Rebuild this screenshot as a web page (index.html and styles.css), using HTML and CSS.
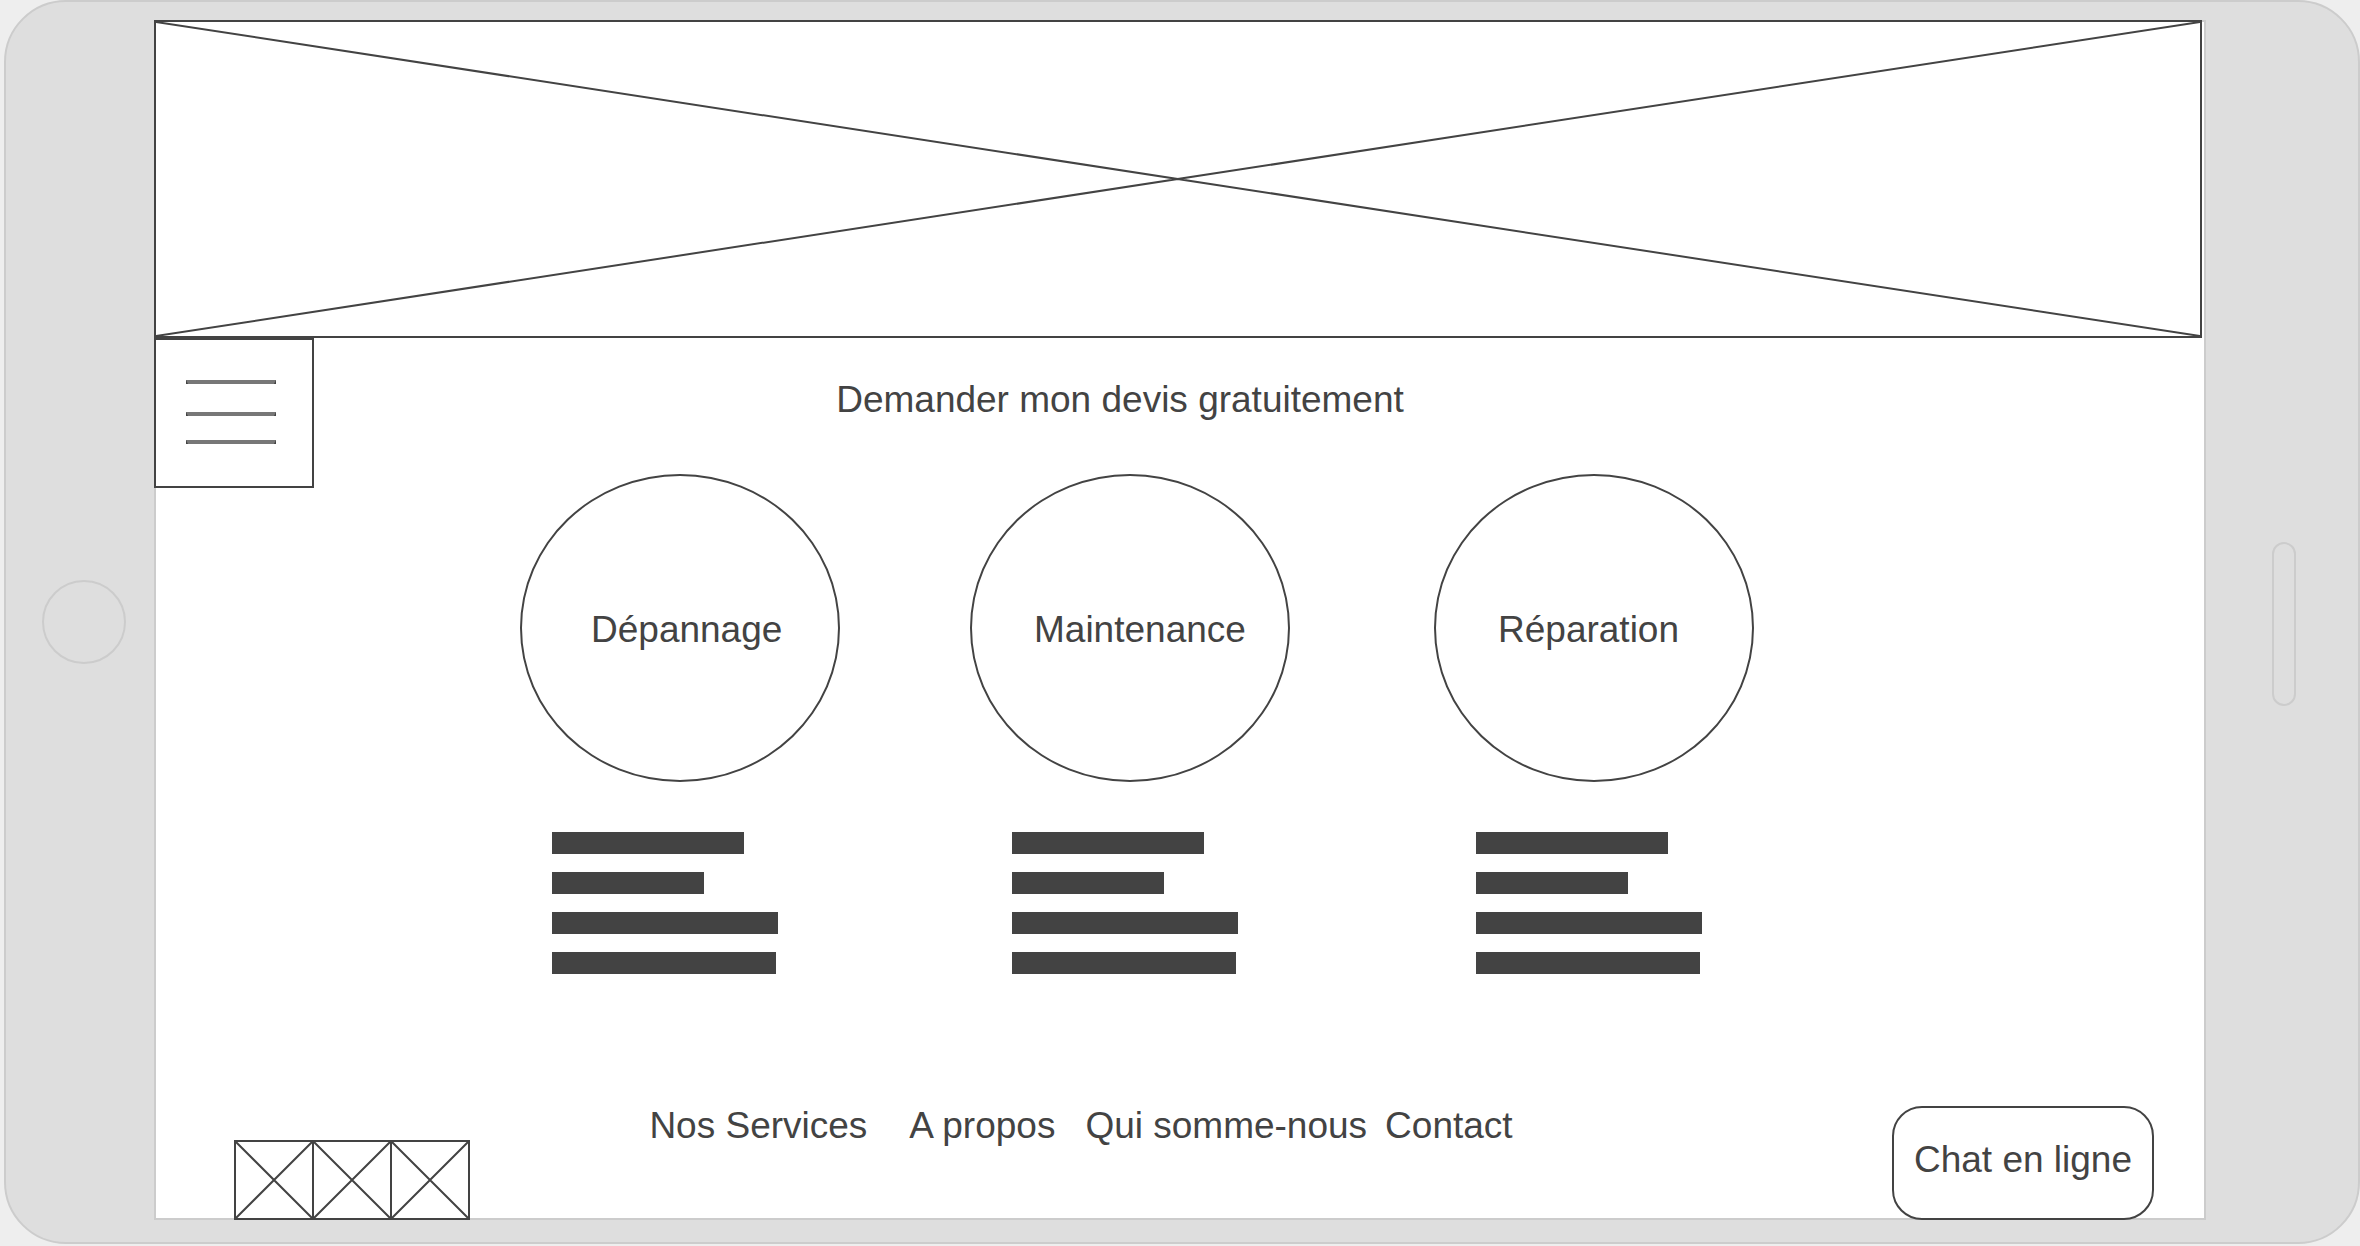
FILE: index.html
```html
<!DOCTYPE html>
<html lang="fr">
<head>
  <meta charset="utf-8">
  <meta name="viewport" content="width=device-width, initial-scale=1">
  <title>Demander mon devis gratuitement</title>
  <link rel="stylesheet" href="styles.css">
</head>
<body>
  <div class="device">
    <div class="bezel bezel--left"><span class="home-button"></span></div>

    <div class="screen">
      <header class="hero">
        <svg class="cross" viewBox="0 0 100 100" preserveAspectRatio="none" aria-hidden="true">
          <path d="M0 0L100 100M0 100L100 0" vector-effect="non-scaling-stroke"/>
        </svg>
      </header>

      <main class="main">
        <button class="menu" type="button" aria-label="Menu">
          <svg width="90" height="64" viewBox="0 0 90 64" aria-hidden="true">
            <path class="menu-line" d="M0 0H90V4H0ZM0 32H90V36H0ZM0 60H90V64H0Z"/>
            <path class="menu-tip" d="M0 0L2 4H0ZM90 0L88 4H90ZM0 32L2 36H0ZM90 32L88 36H90ZM0 60L2 64H0ZM90 60L88 64H90Z"/>
          </svg>
        </button>

        <div class="content">
          <h1 class="title"><a href="#devis">Demander mon devis gratuitement</a></h1>

          <div class="services">
            <section class="service service--first">
              <a class="disc" href="#depannage">Dépannage</a>
              <div class="lines"><i class="line line--a"></i><i class="line line--b"></i><i class="line line--c"></i><i class="line line--d"></i></div>
            </section>
            <section class="service">
              <a class="disc" href="#maintenance">Maintenance</a>
              <div class="lines"><i class="line line--a"></i><i class="line line--b"></i><i class="line line--c"></i><i class="line line--d"></i></div>
            </section>
            <section class="service service--last">
              <a class="disc" href="#reparation">Réparation</a>
              <div class="lines"><i class="line line--a"></i><i class="line line--b"></i><i class="line line--c"></i><i class="line line--d"></i></div>
            </section>
          </div>
        </div>
      </main>

      <footer class="footer">
        <div class="social">
          <a class="social-link" href="#social-1" aria-label="Réseau social 1"><svg class="cross" viewBox="0 0 76 76" aria-hidden="true"><path d="M0 0L76 76M0 76L76 0"/></svg></a>
          <a class="social-link" href="#social-2" aria-label="Réseau social 2"><svg class="cross" viewBox="0 0 76 76" aria-hidden="true"><path d="M0 0L76 76M0 76L76 0"/></svg></a>
          <a class="social-link" href="#social-3" aria-label="Réseau social 3"><svg class="cross" viewBox="0 0 76 76" aria-hidden="true"><path d="M0 0L76 76M0 76L76 0"/></svg></a>
        </div>
        <nav class="nav">
          <a class="nav-services" href="#services">Nos Services</a>
          <a class="nav-about" href="#apropos">A propos</a>
          <a class="nav-who" href="#qui">Qui somme-nous</a>
          <a href="#contact">Contact</a>
        </nav>
        <button class="chat" type="button">Chat en ligne</button>
      </footer>
    </div>

    <div class="bezel bezel--right"><span class="speaker"></span></div>
  </div>
</body>
</html>
```

FILE: styles.css
```css
:root {
  --ink: #434343;
  --edge: #cccccc;
  --shell: #dedede;
}

* {
  box-sizing: border-box;
}

body {
  margin: 0;
  background: #eeeeee;
  color: var(--ink);
  font: 37px/44px "Liberation Sans", Arial, sans-serif;
}

a {
  color: inherit;
  text-decoration: none;
}

button {
  font: inherit;
  color: inherit;
  background: #ffffff;
  border: 2px solid var(--ink);
  cursor: pointer;
}

.device {
  display: grid;
  grid-template-columns: 148px 1fr 152px;
  min-height: calc(100vh - 2px);
  margin: 0 0 2px 4px;
  background: var(--shell);
  border: 2px solid var(--edge);
  border-radius: 62px;
}

.bezel {
  display: flex;
  align-items: center;
  justify-content: center;
}

.bezel--left {
  padding-left: 8px;
}

.bezel--right {
  padding: 4px 0 0 4px;
}

.home-button {
  width: 84px;
  height: 84px;
  border: 2px solid var(--edge);
  border-radius: 50%;
}

.speaker {
  width: 24px;
  height: 164px;
  border: 2px solid var(--edge);
  border-radius: 12px;
}

.screen {
  display: flex;
  flex-direction: column;
  margin: 18px 0 22px;
  background: #ffffff;
  box-shadow: inset 0 0 0 2px var(--edge);
}

.hero {
  height: 318px;
  margin-right: 4px;
  background: #ffffff;
  border: 2px solid var(--ink);
}

.cross {
  display: block;
  width: 100%;
  height: 100%;
  fill: none;
  stroke: var(--ink);
  stroke-width: 2;
}

.main {
  display: grid;
  grid-template-columns: 160px 1fr;
  align-items: start;
}

.menu {
  height: 150px;
  padding: 40px 30px 42px;
}

.menu svg {
  display: block;
}

.menu-line {
  fill: #777777;
}

.menu-tip {
  fill: var(--ink);
}

.content {
  display: flex;
  flex-direction: column;
  align-items: center;
  padding: 40px 246px 0 0;
}

.title {
  margin: 0 34px 52px 0;
  font: inherit;
}

.services {
  display: flex;
}

.service {
  --label-inset: 62px;
  --lines-inset: 42px;
  width: 320px;
}

.service--first {
  --label-inset: 69px;
  --lines-inset: 32px;
  margin-right: 130px;
}

.service--last {
  margin-left: 144px;
}

.disc {
  display: flex;
  align-items: center;
  height: 308px;
  padding: 4px 0 0 var(--label-inset);
  border: 2px solid var(--ink);
  border-radius: 50%;
}

.lines {
  display: grid;
  gap: 18px;
  padding: 50px 0 0 var(--lines-inset);
}

.line {
  height: 22px;
  background: var(--ink);
}

.line--a { width: 192px; }
.line--b { width: 152px; }
.line--c { width: 226px; }
.line--d { width: 224px; }

.footer {
  display: flex;
  align-items: flex-end;
  justify-content: space-between;
  min-height: 116px;
  margin-top: auto;
  padding: 0 52px 0 80px;
}

.social {
  display: flex;
}

.social-link {
  width: 80px;
  height: 80px;
  background: #ffffff;
  border: 2px solid var(--ink);
}

.social-link + .social-link {
  margin-left: -2px;
}

.nav {
  display: flex;
  align-self: flex-start;
  margin-right: 200px;
}

.nav-services { margin-right: 42px; }
.nav-about { margin-right: 30px; }
.nav-who { margin-right: 18px; }

.chat {
  width: 262px;
  height: 114px;
  padding: 0 0 6px;
  border-radius: 30px;
}
```
